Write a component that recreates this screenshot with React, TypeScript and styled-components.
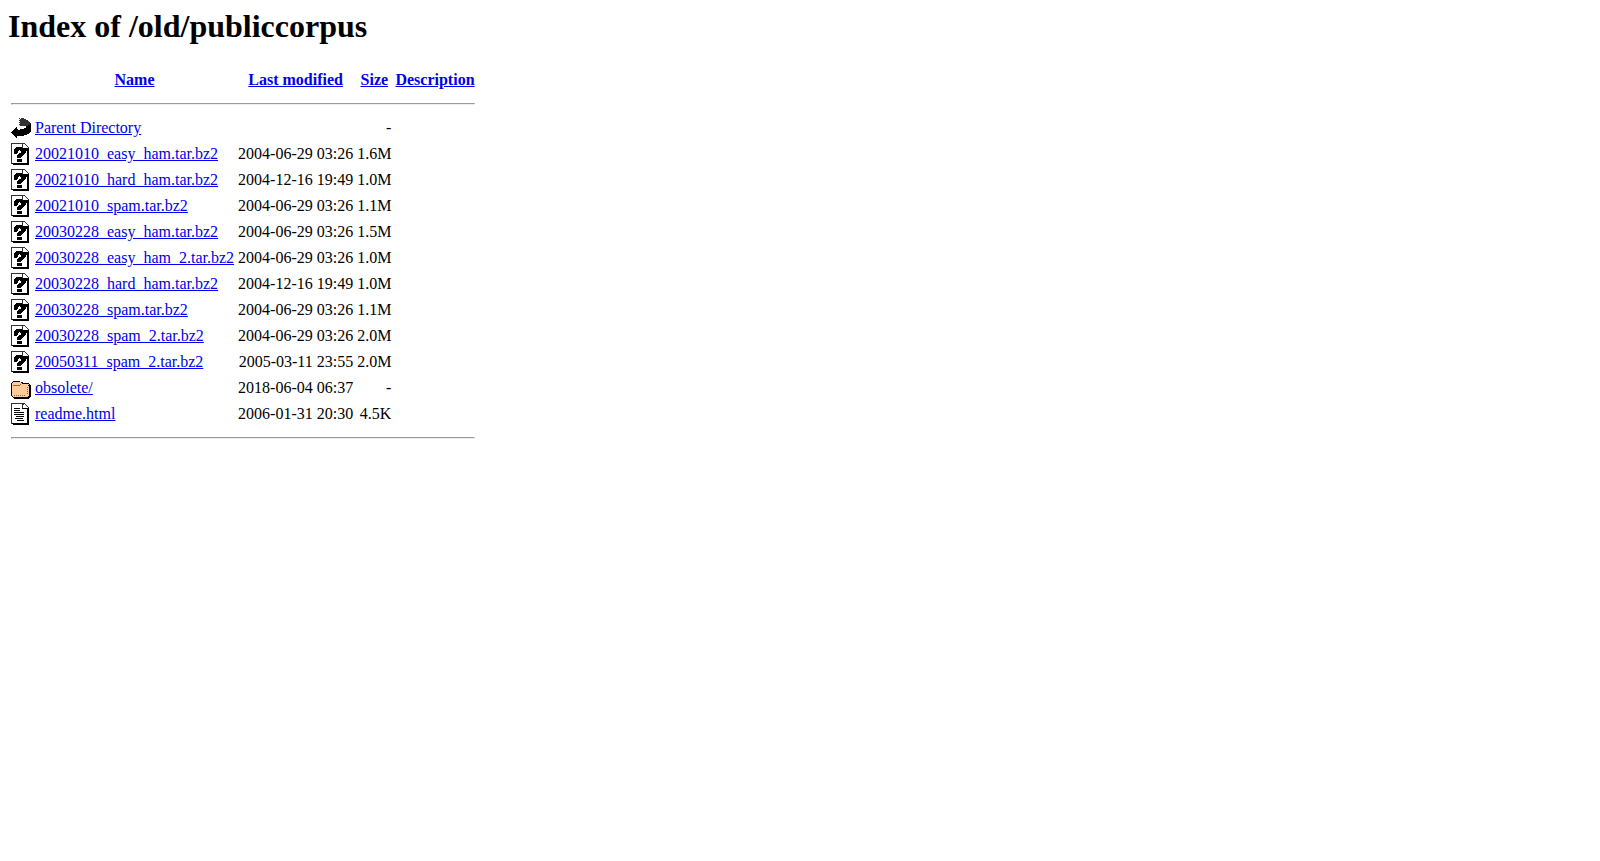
import React from 'react';
import styled, { createGlobalStyle } from 'styled-components';

const GlobalStyle = createGlobalStyle`
  body {
    margin: 8px;
    background: #fff;
    color: #000;
    font-family: "Liberation Serif", "Times New Roman", serif;
    font-size: 16px;
  }
`;

const Title = styled.h1`
  margin: 0 0 21px;
  font-size: 32px;
  line-height: 37px;
  font-weight: bold;
`;

const Listing = styled.table`
  border-collapse: separate;
  border-spacing: 2px;
`;

const Head = styled.th`
  padding: 1px;
  white-space: nowrap;
`;

const Cell = styled.td<{ $align?: 'left' | 'right' }>`
  padding: 1px;
  text-align: ${(p) => p.$align ?? 'left'};
  white-space: nowrap;
`;

const Link = styled.a`
  color: #0000ee;
  text-decoration: underline;
`;

const Rule = styled.hr`
  margin: 8px 0;
  border: 1px solid;
  border-color: #9a9a9a #eeeeee #eeeeee #9a9a9a;
`;

const Icon = styled.svg`
  display: block;
  width: 20px;
  height: 22px;
`;

type Kind = 'blank' | 'back' | 'unknown' | 'folder' | 'text';

/* Pixel art: one string per row, one letter per pixel. */
const palette: Record<string, string> = {
  k: '#000000',
  g: '#333333',
  o: '#ffcc99',
  b: '#996633',
};

const art: Record<Kind, string[]> = {
  blank: [],
  back: [
    '',
    '........g.ggg.......',
    '.........gggggg.....',
    '........ggggggggg...',
    '.........ggggggggg..',
    '........ggggggggggg.',
    '.........ggggggggggg',
    '........gggggggggggk',
    '.........ggggggggkkk',
    '...............kkkkk',
    '.....k.........kkkkk',
    '....kk.......kkkkkkk',
    '...kkkk..kkkkkkkkkkk',
    '..kkkkkkkkkkkkkkkkkk',
    '.kkkkkkkkkkkkkkkkkkk',
    'kkkkkkkkkkkkkkkkkkk.',
    '.kkkkkkkkkkkkkkkkk..',
    '..kkkkkkkkkkkkkk....',
    '...kkkkkkkkkk.......',
    '....kk..............',
    '.....k..............',
  ],
  unknown: [
    'gggggggggggggg......',
    'g..........g..g.....',
    'g..........g...g....',
    'g..........g....g...',
    'g....kkkkkkg.....g..',
    'g...kkkkkkkkkkkkkk..',
    'g..kkkkkkkkkkkkkkk..',
    'g..kkkkk.kkkkkkkkk..',
    'g..kkkk...kkkkk.kk..',
    'g..kkkk...kkkkk.kk..',
    'g..kkk..kkkkkk..kk..',
    'g......kkkkkk...kk..',
    'g.....kkkkkk....kk..',
    'g.....kkkkk.....kk..',
    'g.....kkkk......kk..',
    'g...............kk..',
    'g.....kkkkk.....kk..',
    'g.....kkkkk.....kk..',
    'g.....kkkkk.....kk..',
    'g...............kk..',
    'gkkkkkkkkkkkkkkkkk..',
    '..kkkkkkkkkkkkkkkk..',
  ],
  folder: [
    '',
    '',
    '',
    '',
    '..kkkkkkk...........',
    '.kooooooookk........',
    'kooooooooookkkkkkk..',
    'koooooooobooooooook.',
    'kobbbbbbbooooooookkk',
    'koooooooooooooooookk',
    'kooooooooooooooobokk',
    'koooooooooooooooookk',
    'kooooooooooooooobokk',
    'koooooooooooooooookk',
    'kooooooooooooooobokk',
    'koooooooooooooooookk',
    'kooooooooooooooobokk',
    'koooooooooooooooookk',
    'koobobobobobobooookk',
    '.koooooooooooooookkk',
    '..kkkkkkkkkkkkkkkkk.',
    '...kkkkkkkkkkkkkkk..',
  ],
  text: [
    'gggggggggggggg......',
    'g..........gg.g.....',
    'g..........g...g....',
    'g..........g....g...',
    'g..........g.....g..',
    'g..kkkkkk..kkkkkkk..',
    'g...............kk..',
    'g..kkkkkk.......kk..',
    'g...............kk..',
    'g..kkkkkkkkkk...kk..',
    'g...............kk..',
    'g..kkkkkkkkkk...kk..',
    'g...............kk..',
    'g....kkkkkkkk...kk..',
    'g...............kk..',
    'g...kkkkkkkk....kk..',
    'g...............kk..',
    'g.....kkkkkkk...kk..',
    'g...............kk..',
    'g...............kk..',
    'gkkkkkkkkkkkkkkkkk..',
    '..kkkkkkkkkkkkkkkk..',
  ],
};

const pathFor = (rows: string[], ink: string) =>
  rows
    .map((row, y) =>
      [...row].map((c, x) => (c === ink ? `M${x} ${y}h1v1h-1z` : '')).join(''),
    )
    .join('');

const labels: Record<Kind, string> = {
  blank: 'Icon',
  back: 'Parent directory',
  unknown: 'File',
  folder: 'Directory',
  text: 'Text file',
};

const FileIcon = ({ kind }: { kind: Kind }) => (
  <Icon viewBox="0 0 20 22" shapeRendering="crispEdges" role="img" aria-label={labels[kind]}>
    {Object.entries(palette).map(([ink, color]) => (
      <path key={ink} fill={color} d={pathFor(art[kind], ink)} />
    ))}
  </Icon>
);

const columns = ['Name', 'Last modified', 'Size', 'Description'];

const entries: { kind: Kind; name: string; date: string; size: string }[] = [
  { kind: 'back', name: 'Parent Directory', date: '', size: '-' },
  { kind: 'unknown', name: '20021010_easy_ham.tar.bz2', date: '2004-06-29 03:26', size: '1.6M' },
  { kind: 'unknown', name: '20021010_hard_ham.tar.bz2', date: '2004-12-16 19:49', size: '1.0M' },
  { kind: 'unknown', name: '20021010_spam.tar.bz2', date: '2004-06-29 03:26', size: '1.1M' },
  { kind: 'unknown', name: '20030228_easy_ham.tar.bz2', date: '2004-06-29 03:26', size: '1.5M' },
  { kind: 'unknown', name: '20030228_easy_ham_2.tar.bz2', date: '2004-06-29 03:26', size: '1.0M' },
  { kind: 'unknown', name: '20030228_hard_ham.tar.bz2', date: '2004-12-16 19:49', size: '1.0M' },
  { kind: 'unknown', name: '20030228_spam.tar.bz2', date: '2004-06-29 03:26', size: '1.1M' },
  { kind: 'unknown', name: '20030228_spam_2.tar.bz2', date: '2004-06-29 03:26', size: '2.0M' },
  { kind: 'unknown', name: '20050311_spam_2.tar.bz2', date: '2005-03-11 23:55', size: '2.0M' },
  { kind: 'folder', name: 'obsolete/', date: '2018-06-04 06:37', size: '-' },
  { kind: 'text', name: 'readme.html', date: '2006-01-31 20:30', size: '4.5K' },
];

const RuleRow = () => (
  <tr>
    <Cell colSpan={5}>
      <Rule />
    </Cell>
  </tr>
);

export default function App() {
  return (
    <main>
      <GlobalStyle />
      <Title>Index of /old/publiccorpus</Title>
      <Listing>
        <thead>
          <tr>
            <Head>
              <FileIcon kind="blank" />
            </Head>
            {columns.map((c) => (
              <Head key={c} scope="col">
                <Link href="#">{c}</Link>
              </Head>
            ))}
          </tr>
          <RuleRow />
        </thead>
        <tbody>
          {entries.map((e) => (
            <tr key={e.name}>
              <Cell>
                <FileIcon kind={e.kind} />
              </Cell>
              <Cell>
                <Link href="#">{e.name}</Link>
              </Cell>
              <Cell $align="right">{e.date}</Cell>
              <Cell $align="right">{e.size}</Cell>
              <Cell />
            </tr>
          ))}
          <RuleRow />
        </tbody>
      </Listing>
    </main>
  );
}
